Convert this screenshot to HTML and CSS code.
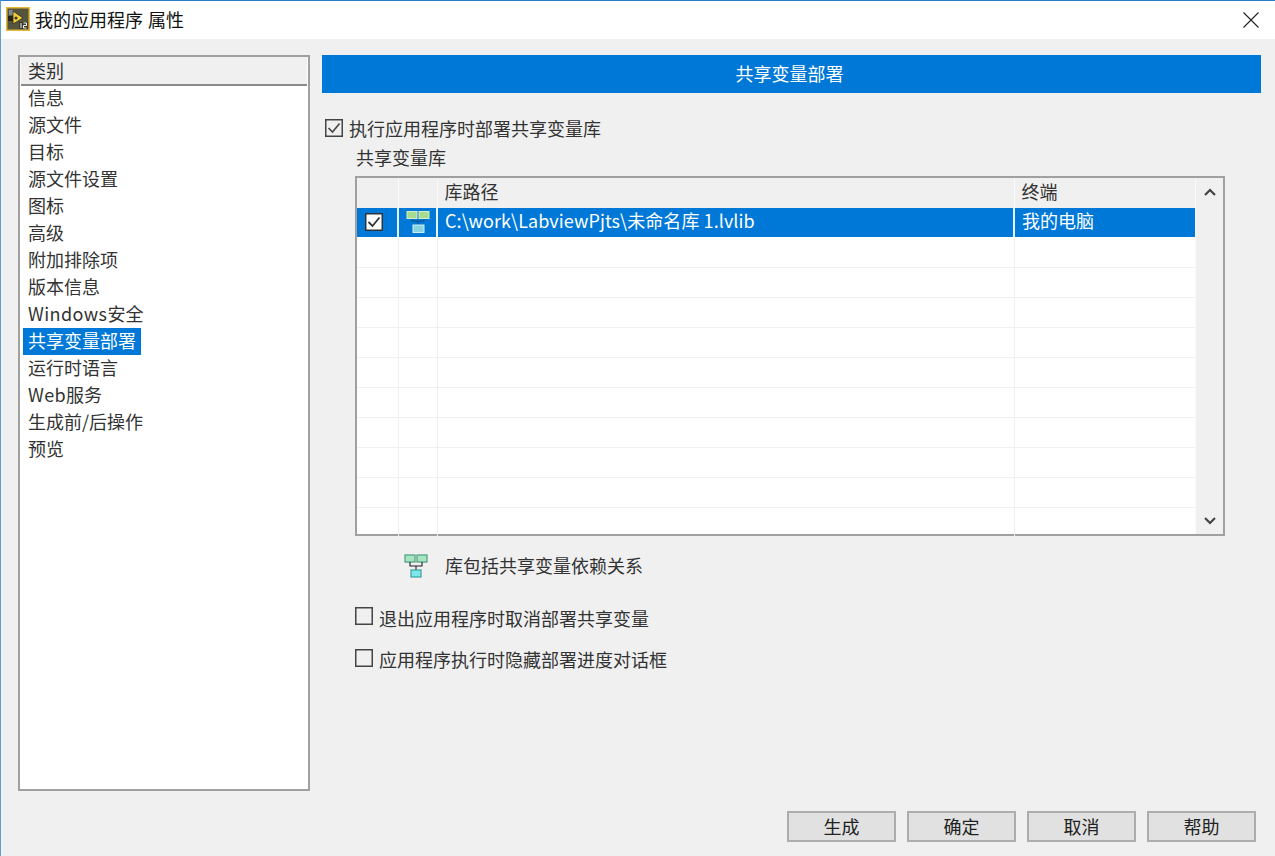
FILE: index.html
```html
<!DOCTYPE html>
<html>
<head>
    <meta charset="UTF-8">
    <title>我的应用程序 属性</title>
    <link rel="stylesheet" href="styles.css">
</head>
<body>
<div class="window">
    <!--标题栏-->
    <div class="titleBar">
        <svg class="appIcon" width="24" height="24" viewBox="0 0 24 24">
            <rect x="0.75" y="0.75" width="22.5" height="22.5" fill="#55543f" stroke="#e6b838" stroke-width="1.5"/>
            <rect x="2" y="9" width="6" height="5" fill="#23231a"/>
            <rect x="3" y="3" width="4" height="5" fill="#7f8a9a"/>
            <path d="M7 4 L17 11 L7 17 Z" fill="#f2cf3a" stroke="#2b2b20" stroke-width="0.8"/>
            <circle cx="10" cy="11" r="1.6" fill="#3a3a2e"/>
            <rect x="13" y="15" width="9" height="7" fill="#3a3a2e"/>
            <path d="M15 16 V21 M17.5 16 H20.5 V18.5 H17.5 V21 H20.5" fill="none" stroke="#f4f4ea" stroke-width="1"/>
        </svg>
        <span class="titleText">我的应用程序 属性</span>
        <svg class="closeIcon" width="16" height="16" viewBox="0 0 16 16">
            <path d="M0.5 0.5 L15.5 15.5 M15.5 0.5 L0.5 15.5" stroke="#222" stroke-width="1.1" fill="none"/>
        </svg>
    </div>

    <div class="content">
        <!--类别列表-->
        <div class="sidebar">
            <div class="sideHead">类别</div>
            <ul class="sideList">
                <li><span>信息</span></li>
                <li><span>源文件</span></li>
                <li><span>目标</span></li>
                <li><span>源文件设置</span></li>
                <li><span>图标</span></li>
                <li><span>高级</span></li>
                <li><span>附加排除项</span></li>
                <li><span>版本信息</span></li>
                <li><span><b class="latin">Windows</b>安全</span></li>
                <li class="active"><span>共享变量部署</span></li>
                <li><span>运行时语言</span></li>
                <li><span><b class="latin">Web</b>服务</span></li>
                <li><span>生成前/后操作</span></li>
                <li><span>预览</span></li>
            </ul>
        </div>

        <!--右侧面板-->
        <div class="panel">
            <div class="banner">共享变量部署</div>

            <label class="checkRow firstCheck">
                <svg class="checkBox" width="18" height="18" viewBox="0 0 18 18">
                    <rect x="0.75" y="0.75" width="16.5" height="16.5" fill="#f0f0f0" stroke="#444" stroke-width="1.5"/>
                    <path d="M3.5 9 L7.5 13 L14.5 4.5" fill="none" stroke="#444" stroke-width="1.6"/>
                </svg>
                <span>执行应用程序时部署共享变量库</span>
            </label>

            <div class="indented">
                <div class="tableLabel">共享变量库</div>
                <div class="tableBox">
                    <table class="libTable">
                        <colgroup>
                            <col class="colCheck">
                            <col class="colIcon">
                            <col class="colPath">
                            <col class="colTarget">
                        </colgroup>
                        <tr class="headRow">
                            <th></th>
                            <th></th>
                            <th>库路径</th>
                            <th>终端</th>
                        </tr>
                        <tr class="selRow">
                            <td class="cellIcon">
                                <svg class="rowCheck" width="18" height="18" viewBox="0 0 18 18">
                                    <rect x="0.75" y="0.75" width="16.5" height="16.5" fill="#fff" stroke="#333" stroke-width="1.5"/>
                                    <path d="M3.5 9 L7.5 13 L14.5 4.5" fill="none" stroke="#333" stroke-width="1.8"/>
                                </svg>
                            </td>
                            <td class="cellIcon">
                                <svg width="24" height="24" viewBox="0 0 24 24">
                                    <rect x="1" y="0.5" width="10" height="7" fill="#a6dc8e" stroke="#d4eecb"/>
                                    <rect x="13" y="0.5" width="10" height="7" fill="#a6dc8e" stroke="#d4eecb"/>
                                    <path d="M6 8 V10 H18 V8 M12 10 V13" fill="none" stroke="#16507e" stroke-width="1"/>
                                    <rect x="7" y="14" width="11" height="7.5" fill="#86d4e0" stroke="#d0eef2"/>
                                </svg>
                            </td>
                            <td class="pathCell">C:\work\LabviewPjts\未命名库 1.lvlib</td>
                            <td>我的电脑</td>
                        </tr>
                        <tr><td></td><td></td><td></td><td></td></tr>
                        <tr><td></td><td></td><td></td><td></td></tr>
                        <tr><td></td><td></td><td></td><td></td></tr>
                        <tr><td></td><td></td><td></td><td></td></tr>
                        <tr><td></td><td></td><td></td><td></td></tr>
                        <tr><td></td><td></td><td></td><td></td></tr>
                        <tr><td></td><td></td><td></td><td></td></tr>
                        <tr><td></td><td></td><td></td><td></td></tr>
                        <tr><td></td><td></td><td></td><td></td></tr>
                        <tr class="lastRow"><td></td><td></td><td></td><td></td></tr>
                    </table>
                    <div class="scrollBar">
                        <svg width="12" height="8" viewBox="0 0 12 8">
                            <path d="M1 7 L6 2 L11 7" fill="none" stroke="#444" stroke-width="2.2"/>
                        </svg>
                        <svg width="12" height="8" viewBox="0 0 12 8">
                            <path d="M1 1 L6 6 L11 1" fill="none" stroke="#444" stroke-width="2.2"/>
                        </svg>
                    </div>
                </div>

                <div class="legend">
                    <svg width="24" height="28" viewBox="0 0 24 28">
                        <rect x="1" y="3" width="10" height="7" fill="#a8e6c0" stroke="#4d9c7e" stroke-width="1.2"/>
                        <rect x="13" y="3" width="10" height="7" fill="#a8e6c0" stroke="#4d9c7e" stroke-width="1.2"/>
                        <path d="M6 10 V14 H18 V10 M12 14 V18" fill="none" stroke="#222" stroke-width="1.1"/>
                        <rect x="7" y="18" width="10" height="7" fill="#7ee6e6" stroke="#3f9fa0" stroke-width="1.2"/>
                    </svg>
                    <span>库包括共享变量依赖关系</span>
                </div>

                <label class="checkRow secondCheck">
                    <svg class="checkBox" width="18" height="18" viewBox="0 0 18 18">
                        <rect x="0.75" y="0.75" width="16.5" height="16.5" fill="#f0f0f0" stroke="#444" stroke-width="1.5"/>
                    </svg>
                    <span>退出应用程序时取消部署共享变量</span>
                </label>
                <label class="checkRow thirdCheck">
                    <svg class="checkBox" width="18" height="18" viewBox="0 0 18 18">
                        <rect x="0.75" y="0.75" width="16.5" height="16.5" fill="#f0f0f0" stroke="#444" stroke-width="1.5"/>
                    </svg>
                    <span>应用程序执行时隐藏部署进度对话框</span>
                </label>
            </div>
        </div>
    </div>

    <!--底部按钮-->
    <div class="buttons">
        <button>生成</button>
        <button>确定</button>
        <button>取消</button>
        <button>帮助</button>
    </div>
</div>
</body>
</html>
```

FILE: styles.css
```css
* {
    margin: 0;
    padding: 0;
    box-sizing: border-box;
}
html, body {
    width: 1275px;
    height: 856px;
    overflow: hidden;
}
body {
    font-family: "Noto Sans CJK SC", "Noto Sans", sans-serif;
    font-size: 18px;
    color: #333;
    background-color: #f0f0f0;
}
ul {
    list-style: none;
}
.window {
    width: 1275px;
    height: 856px;
    display: flex;
    flex-direction: column;
    border-top: 1px solid #2b7fc4;
    border-left: 1px solid #5a9fd6;
}
.titleBar {
    height: 38px;
    flex: none;
    background-color: #fff;
    display: flex;
    align-items: center;
    padding-left: 5px;
    padding-right: 16px;
    color: #111;
}
.appIcon {
    flex: none;
    margin-top: -2px;
}
.titleText {
    margin-left: 5px;
    margin-top: -2px;
    line-height: 24px;
    word-spacing: 1px;
}
.closeIcon {
    margin-left: auto;
}
.content {
    flex: none;
    display: flex;
    padding-top: 16px;
    padding-left: 17px;
}
.sidebar {
    width: 292px;
    height: 736px;
    background-color: #fff;
    border: 2px solid #a0a0a0;
}
.sideHead {
    height: 29px;
    line-height: 27px;
    margin: 0 1px;
    padding-left: 7px;
    background-color: #f0f0f0;
    border-bottom: 2px solid #8a8a8a;
}
.sideList {
    margin-top: -1px;
    padding-left: 3px;
}
.sideList li {
    height: 27px;
}
.sideList li span {
    display: block;
    width: fit-content;
    height: 27px;
    line-height: 25px;
    padding: 0 5px;
}
.latin {
    font-weight: normal;
    letter-spacing: 0.4px;
}
.sideList .active span {
    background-color: #0078d7;
    color: #fff;
}
.panel {
    width: 939px;
    margin-left: 12px;
}
.banner {
    height: 38px;
    line-height: 36px;
    padding-right: 4px;
    text-align: center;
    color: #fff;
    background-color: #0078d7;
}
.checkRow {
    display: flex;
    align-items: center;
    height: 18px;
}
.checkRow .checkBox {
    flex: none;
    margin-right: 6px;
}
.firstCheck {
    margin-top: 26px;
    margin-left: 3px;
}
.indented {
    margin-left: 33px;
}
.tableLabel {
    margin-top: 8px;
    margin-left: 1px;
    height: 24px;
    line-height: 24px;
}
.tableBox {
    width: 870px;
    height: 360px;
    margin-top: 7px;
    display: flex;
    background-color: #fff;
    border: 2px solid #a0a0a0;
}
.libTable {
    width: 838px;
    height: 356px;
    table-layout: fixed;
    border-collapse: collapse;
    flex: none;
}
.colCheck {
    width: 41px;
}
.colIcon {
    width: 39px;
}
.colTarget {
    width: 181px;
}
.libTable th {
    height: 30px;
    font-weight: normal;
    text-align: left;
    padding-left: 7px;
    padding-bottom: 4px;
    background-color: #f0f0f0;
    border-right: 1px solid #fafafa;
}
.libTable th:last-child {
    border-right: none;
}
.libTable td {
    height: 30px;
    padding-left: 7px;
    border-right: 1px solid #f0f0f0;
    border-bottom: 1px solid #f0f0f0;
}
.libTable td:last-child {
    border-right: none;
}
.libTable .selRow td {
    height: 29px;
    padding-bottom: 4px;
    line-height: 25px;
    color: #fff;
    background-color: #0078d7;
    border-right: 2px solid #e8f2fb;
    border-bottom: none;
}
.libTable .selRow td:last-child {
    border-right: none;
}
.libTable .selRow .cellIcon {
    padding: 0;
    text-align: center;
    line-height: 0;
}
.libTable .selRow .pathCell {
    letter-spacing: 0.07px;
}
.rowCheck {
    margin-right: 7px;
    margin-bottom: 2px;
}
.libTable .lastRow td {
    border-bottom: none;
}
.scrollBar {
    flex: 1;
    background-color: #f0f0f0;
    display: flex;
    flex-direction: column;
    justify-content: space-between;
    align-items: center;
    padding: 10px 0 9px;
    border-left: 1px solid #fafafa;
}
.legend {
    display: flex;
    align-items: center;
    height: 28px;
    margin-top: 16px;
    margin-left: 49px;
}
.legend span {
    margin-left: 17px;
    line-height: 24px;
    margin-top: -3px;
}
.secondCheck {
    margin-top: 27px;
}
.secondCheck span {
    margin-top: 4px;
}
.thirdCheck {
    margin-top: 24px;
}
.thirdCheck span {
    margin-top: 2px;
}
.buttons {
    flex: none;
    display: flex;
    justify-content: flex-end;
    gap: 11px;
    padding-right: 19px;
    margin-top: 20px;
}
.buttons button {
    width: 109px;
    height: 31px;
    padding-bottom: 4px;
    font-family: inherit;
    font-size: 18px;
    color: #222;
    background-color: #e1e1e1;
    border: 2px solid #adadad;
}
```
